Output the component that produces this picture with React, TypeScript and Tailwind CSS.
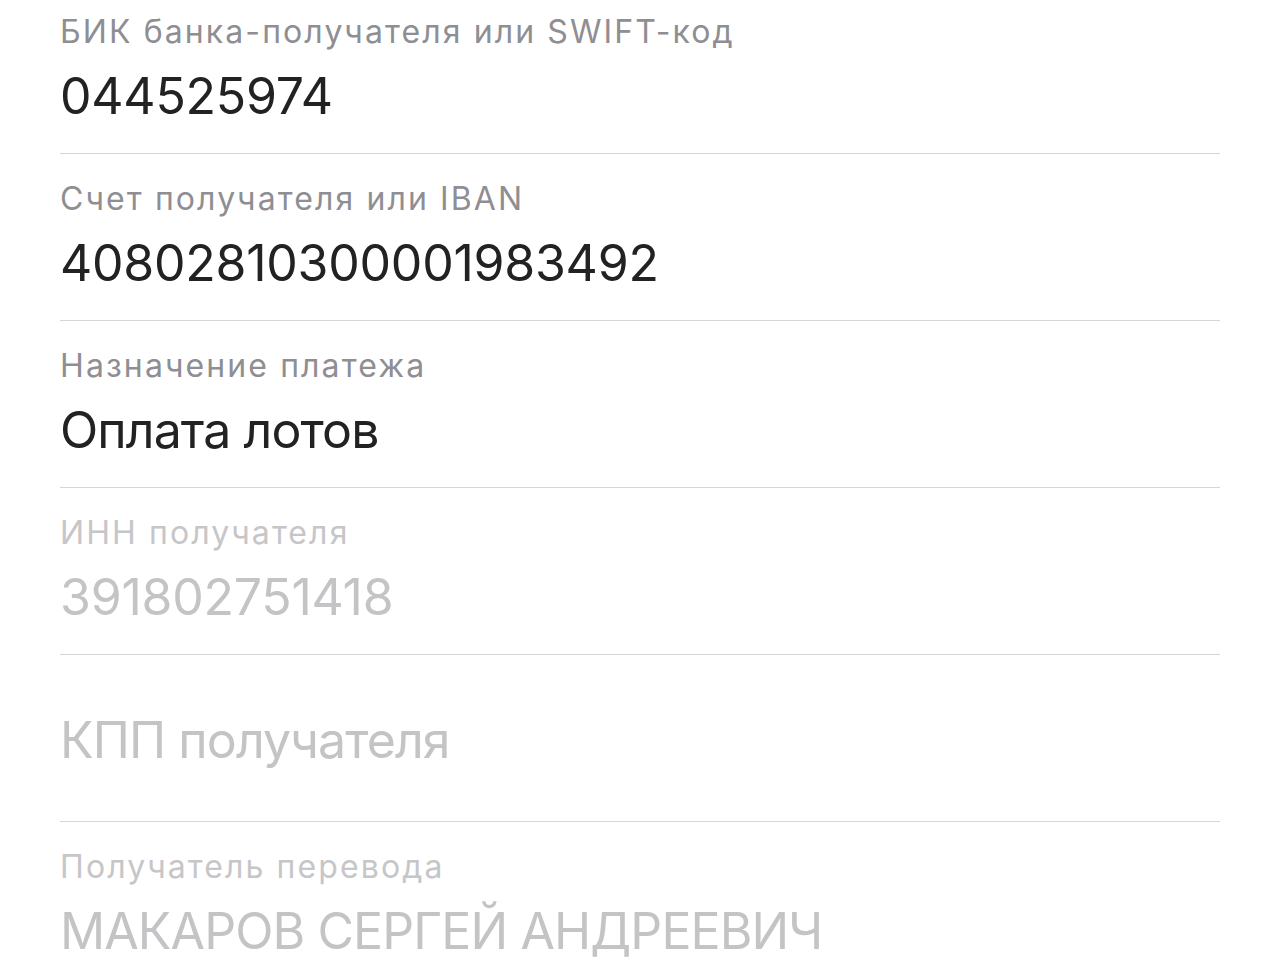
import React from "react";

type Row = { label?: string; value: string; disabled?: boolean; placeholder?: boolean; digits?: boolean };

const rows: Row[] = [
  { label: "БИК банка-получателя или SWIFT-код", value: "044525974", digits: true },
  { label: "Счет получателя или IBAN", value: "40802810300001983492", digits: true },
  { label: "Назначение платежа", value: "Оплата лотов" },
  { label: "ИНН получателя", value: "391802751418", disabled: true, digits: true },
  { value: "КПП получателя", placeholder: true },
  { label: "Получатель перевода", value: "МАКАРОВ СЕРГЕЙ АНДРЕЕВИЧ", disabled: true },
];

export default function App() {
  return (
    <div
      className="w-[1280px] h-[979px] overflow-hidden bg-white"
      style={{ fontFamily: "Inter, 'Noto Sans', sans-serif" }}
    >
      <div className="-mt-[13px] px-[60px]">
        {rows.map((r, i) => (
          <div key={i} className="h-[167px] border-b border-[#d6d6da] flex flex-col">
            {r.placeholder ? (
              <div className="pt-[55px] text-[50px] leading-[60px] text-[#c4c4c6] tracking-[-0.9px]">
                {r.value}
              </div>
            ) : (
              <>
                <div
                  className={`pt-[25px] text-[32px] leading-[40px] tracking-[2.1px] ${
                    r.disabled ? "text-[#c6c6c8]" : "text-[#8e8e93]"
                  }`}
                >
                  {r.label}
                </div>
                <div
                  className={`mt-[14px] text-[50px] leading-[60px] ${
                    r.digits ? "tracking-[-0.25px]" : "tracking-[-0.9px]"
                  } ${r.disabled ? "text-[#c4c4c6]" : "text-[#222222]"}`}
                >
                  {r.value}
                </div>
              </>
            )}
          </div>
        ))}
      </div>
    </div>
  );
}
